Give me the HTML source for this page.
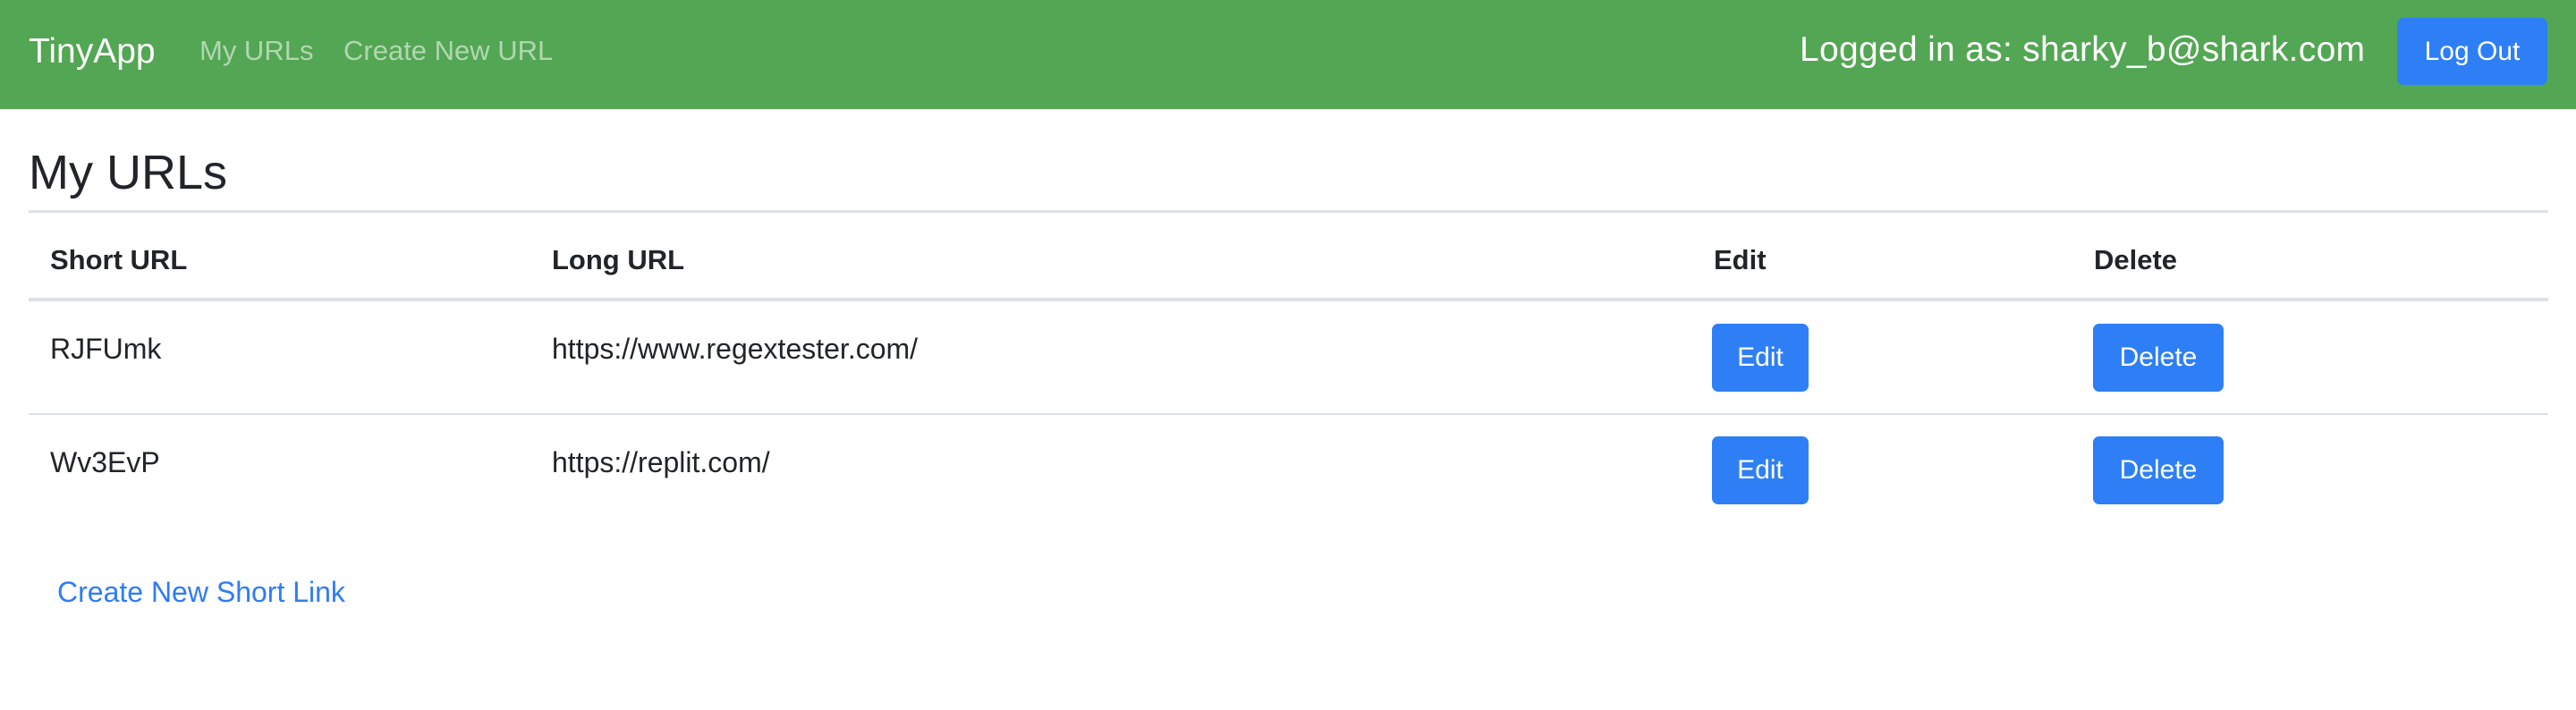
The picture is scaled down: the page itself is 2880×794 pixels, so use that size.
<!DOCTYPE html>
<html><head><meta charset="utf-8"><style>
*{margin:0;padding:0;box-sizing:border-box}
body{width:2880px;height:794px;background:#fff;font-family:"Liberation Sans",sans-serif;color:#212529;position:relative;overflow:hidden}
.a{position:absolute;white-space:nowrap;line-height:1}
.nav{position:absolute;left:0;top:0;width:2880px;height:122px;background:#53a653}
.btn{position:absolute;background:#2e7ff6;color:#fff;border-radius:7px;font-size:30px;display:flex;align-items:center;justify-content:center}
.line{position:absolute;left:32px;width:2817px;background:#dee2e6}
.b{font-weight:bold;font-size:31px}
.t{font-size:32px}
</style></head><body>
<div class="nav"></div>
<div class="a" style="left:32px;top:38px;font-size:39px;color:#fff">TinyApp</div>
<div class="a" style="left:223px;top:41px;font-size:31px;color:rgba(255,255,255,.55)">My URLs</div>
<div class="a" style="left:384px;top:41px;font-size:31px;color:rgba(255,255,255,.55)">Create New URL</div>
<div class="a" style="left:2012px;top:36px;font-size:39px;color:#fff;letter-spacing:0.3px">Logged in as: sharky_b@shark.com</div>
<div class="btn" style="left:2680px;top:20px;width:168px;height:75px;font-size:30px">Log Out</div>

<div class="a" style="left:32px;top:166px;font-size:54px">My URLs</div>
<div class="line" style="top:235px;height:3px"></div>

<div class="a b" style="left:56px;top:275px">Short URL</div>
<div class="a b" style="left:617px;top:275px">Long URL</div>
<div class="a b" style="left:1916px;top:275px">Edit</div>
<div class="a b" style="left:2341px;top:275px">Delete</div>
<div class="line" style="top:333px;height:4px"></div>

<div class="a t" style="left:56px;top:374px">RJFUmk</div>
<div class="a t" style="left:617px;top:374px">https://www.regextester.com/</div>
<div class="btn" style="left:1914px;top:362px;width:108px;height:76px">Edit</div>
<div class="btn" style="left:2340px;top:362px;width:146px;height:76px">Delete</div>
<div class="line" style="top:462px;height:2px"></div>

<div class="a t" style="left:56px;top:501px">Wv3EvP</div>
<div class="a t" style="left:617px;top:501px">https://replit.com/</div>
<div class="btn" style="left:1914px;top:488px;width:108px;height:76px">Edit</div>
<div class="btn" style="left:2340px;top:488px;width:146px;height:76px">Delete</div>

<div class="a t" style="left:64px;top:646px;color:#2e7cf6">Create New Short Link</div>
</body></html>
